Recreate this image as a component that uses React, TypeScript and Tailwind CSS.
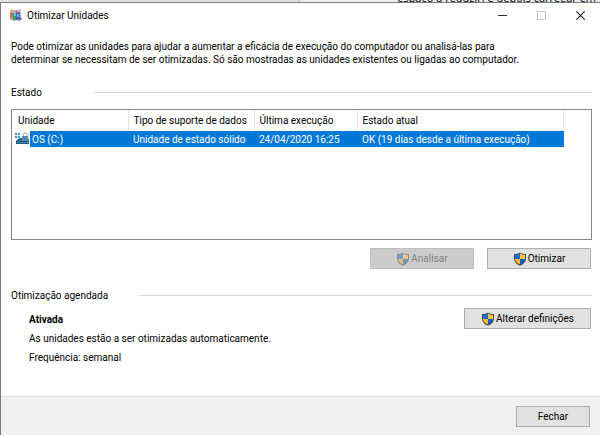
import React, { useState } from 'react';

interface Drive {
  id: string;
  name: string;
  mediaType: string;
  lastRun: string;
  status: string;
}

const drives: Drive[] = [
  {
    id: 'c',
    name: 'OS (C:)',
    mediaType: 'Unidade de estado sólido',
    lastRun: '24/04/2020 16:25',
    status: 'OK (19 dias desde a última execução)'
  }
];

const ShieldIcon: React.FC = () => (
  <svg className="h-[14px] w-[14px] shrink-0" viewBox="0 0 14 14" aria-hidden="true">
    <path d="M7 0.4C5.4 1.5 3.2 2 1 2V6.5C1 9.8 3.2 12.2 7 13.7C10.8 12.2 13 9.8 13 6.5V2C10.8 2 8.6 1.5 7 0.4Z" fill="#4a4a4a" />
    <path d="M7 1.6C5.6 2.4 4 2.9 2 3V7H7Z" fill="#1c6fd4" />
    <path d="M7 1.6C8.4 2.4 10 2.9 12 3V7H7Z" fill="#fdc63b" />
    <path d="M2 7C2.3 9.6 4 11.4 7 12.6V7Z" fill="#fdb92b" />
    <path d="M12 7C11.7 9.6 10 11.4 7 12.6V7Z" fill="#0f5fc4" />
  </svg>
);

const AppIcon: React.FC = () => (
  <svg className="h-[14px] w-[14px] shrink-0" viewBox="0 0 14 14" aria-hidden="true">
    <path d="M1 4L5 2L12 4V11L5 13L1 11Z" fill="#c9b6dc" />
    <path d="M1 4L4 5V12L1 10Z" fill="#c9745c" />
    <path d="M4 5H7V12L4 12Z" fill="#2f9d7c" />
    <path d="M7 5L11 4V11L7 12Z" fill="#3a62ad" />
    <rect x="5" y="5" width="2" height="3" fill="#5ec9dd" />
    <rect x="8" y="6" width="2" height="3" fill="#62b8e8" />
    <path d="M1 3L3 1L5 3L3 5Z" fill="#e7a35c" />
    <path d="M6 3L8 2L9 4L7 5Z" fill="#d9524c" />
    <path d="M9 2L11 1L12 3L10 4Z" fill="#b59add" />
    <path d="M10 9L13 10L12 12L9 13Z" fill="#7a5ca8" />
    <rect x="2" y="9" width="2" height="2" fill="#e58b3e" />
  </svg>
);

const DriveIcon: React.FC = () => (
  <svg className="h-[14px] w-[14px] shrink-0" viewBox="0 0 14 14" aria-hidden="true">
    <path d="M8.5 5V2.8C8.5 0.3 12 0.3 12 2.8V5" fill="none" stroke="#a9b7ba" strokeWidth="1.2" />
    <path d="M3 7L5 6H13L14 8V12H1V9Z" fill="#2e6a9b" />
    <path d="M1 9H14V12H1Z" fill="#1d5685" />
    <rect x="7" y="4" width="6" height="5" fill="#4f8db5" />
    <rect x="2" y="10" width="9" height="1" fill="#3f7fae" />
    <rect x="12" y="10" width="1" height="1" fill="#7fe0a0" />
    <path d="M0 1H2V3H0ZM3 1H5V3H3ZM0 4H2V6H0ZM3 4H5V6H3Z" fill="#2499dc" />
  </svg>
);

const buttonClass =
  'flex h-[21px] items-center justify-center gap-px border border-[#adadad] bg-[#e1e1e1] leading-[13px] whitespace-nowrap disabled:border-[#bfbfbf] disabled:bg-[#cccccc] disabled:text-[#838383]';

const SectionTitle: React.FC<{ title: string; className: string }> = ({ title, className }) => (
  <div className="flex items-center">
    <h2 className={className}>{title}</h2>
    <hr className="grow border-t border-[#d5d5d5]" />
  </div>
);

const App: React.FC = () => {
  const [selected, setSelected] = useState('c');

  return (
    <div className="bg-white font-[Roboto,sans-serif] text-[10px] leading-[13px] text-black">
      {/* Page behind the dialog */}
      <div className="flex h-[2px] overflow-hidden bg-[#e3e3e3]">
        <div className="w-1/2 border-r border-[#bdbdbd]" />
        <div className="flex w-1/2 items-end justify-end bg-[#ededed] pr-1 font-['Open_Sans',sans-serif] text-[11px] leading-[8px] whitespace-nowrap">
          espaço a reduzir, e depois carregar em
        </div>
      </div>

      <main className="border-t border-l border-[#7b7b7b]">
        {/* Title bar */}
        <header className="flex h-6 items-center pl-2">
          <AppIcon />
          <h1 className="grow pl-1">Otimizar Unidades</h1>
          <button aria-label="Minimizar" className="flex h-6 w-[39px] items-center justify-center">
            <svg className="h-[9px] w-[9px]" viewBox="0 0 9 9">
              <path d="M0 4.5H9" stroke="#333" />
            </svg>
          </button>
          <button aria-label="Maximizar" disabled className="flex h-6 w-[39px] items-center justify-center">
            <svg className="h-[9px] w-[9px]" viewBox="0 0 9 9">
              <path d="M0.5 0.5H8.5V8.5H0.5Z" fill="none" stroke="#c6c6c6" />
            </svg>
          </button>
          <button aria-label="Fechar janela" className="flex h-6 w-[39px] items-center justify-center">
            <svg className="h-[9px] w-[9px]" viewBox="0 0 9 9">
              <path d="M0.3 0.3L8.7 8.7M8.7 0.3L0.3 8.7" stroke="#222" strokeWidth="1.1" />
            </svg>
          </button>
        </header>

        <div className="pt-[13px] pr-2 pb-8 pl-[10px]">
          <p className="max-w-[520px]">
            Pode otimizar as unidades para ajudar a aumentar a eficácia de execução do computador ou analisá-las para
            determinar se necessitam de ser otimizadas. Só são mostradas as unidades existentes ou ligadas ao computador.
          </p>

          {/* Drive list */}
          <section className="pt-5">
            <SectionTitle title="Estado" className="w-[83px]" />
            <div className="mt-[10px] h-[131px] border border-[#828790] pr-[27px]">
              <table className="w-full table-fixed text-left whitespace-nowrap">
                <colgroup>
                  <col className="w-[116px]" />
                  <col className="w-[126px]" />
                  <col className="w-[103px]" />
                  <col />
                </colgroup>
                <thead>
                  <tr className="h-[21px]">
                    <th className="border-r border-[#e5e5e5] pl-[6px] font-normal">Unidade</th>
                    <th className="border-r border-[#e5e5e5] pl-[5px] font-normal">Tipo de suporte de dados</th>
                    <th className="border-r border-[#e5e5e5] pl-[5px] font-normal">Última execução</th>
                    <th className="border-r border-[#e5e5e5] pl-[5px] font-normal">Estado atual</th>
                  </tr>
                </thead>
                <tbody>
                  {drives.map((drive) => (
                    <tr
                      key={drive.id}
                      onClick={() => setSelected(drive.id)}
                      className={selected === drive.id ? 'h-4 bg-[#0078d7] text-white' : 'h-4'}
                    >
                      <td>
                        <div className="flex h-4 items-center">
                          <div className="flex h-4 w-[18px] items-center justify-end bg-white pr-px">
                            <DriveIcon />
                          </div>
                          <span className="pl-[2px]">{drive.name}</span>
                        </div>
                      </td>
                      <td className="pl-[5px]">{drive.mediaType}</td>
                      <td className="pl-[5px]">{drive.lastRun}</td>
                      <td className="pl-[5px]">{drive.status}</td>
                    </tr>
                  ))}
                </tbody>
              </table>
            </div>
            <div className="flex justify-end gap-[13px] pt-2 pr-px">
              <button disabled className={`${buttonClass} w-[104px]`}>
                <span className="opacity-50">
                  <ShieldIcon />
                </span>
                Analisar
              </button>
              <button className={`${buttonClass} w-[104px]`}>
                <ShieldIcon />
                Otimizar
              </button>
            </div>
          </section>

          {/* Schedule */}
          <section className="pt-5">
            <SectionTitle title="Otimização agendada" className="w-[128px]" />
            <div className="flex items-start justify-between pt-[6px] pr-px pl-[18px]">
              <div className="flex flex-col gap-[6px] pt-[5px]">
                <p className="font-bold">Ativada</p>
                <p>As unidades estão a ser otimizadas automaticamente.</p>
                <p>Frequência: semanal</p>
              </div>
              <button className={`${buttonClass} w-[127px]`}>
                <ShieldIcon />
                Alterar definições
              </button>
            </div>
          </section>
        </div>

        <footer className="flex h-[39px] items-center justify-end border-t border-[#dfdfdf] bg-[#f0f0f0] pr-[10px]">
          <button className={`${buttonClass} w-[74px]`}>Fechar</button>
        </footer>
      </main>
    </div>
  );
};

export default App;
